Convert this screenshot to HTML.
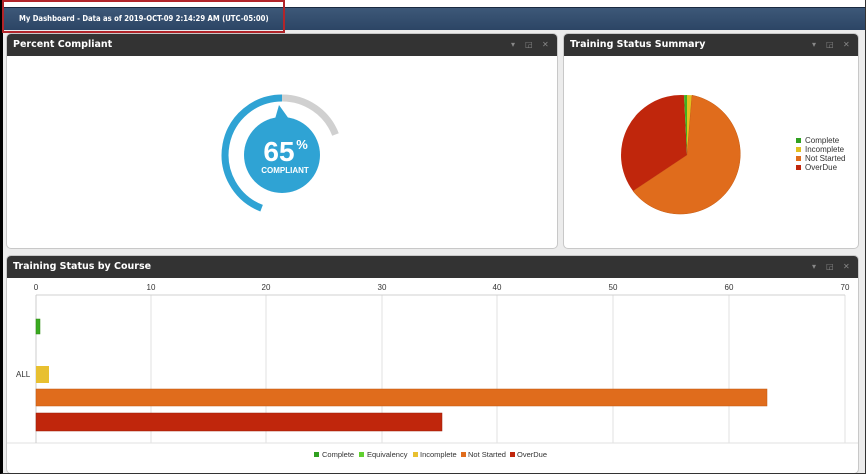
<!DOCTYPE html>
<html><head><style>
body{margin:0;width:866px;height:474px;overflow:hidden;background:#fff;font-family:"DejaVu Sans",Verdana,sans-serif;position:relative}
.frame{position:absolute;left:0;top:0;width:866px;height:474px;box-sizing:border-box;border-left:3px solid #000;border-right:1px solid #333;border-bottom:1px solid #333}
.bg{position:absolute;left:3px;top:29px;right:1px;bottom:1px;background:#ececec}
.hdr{position:absolute;left:3px;top:7px;right:1px;height:22px;background:linear-gradient(#3d5878,#2c4565);border-top:1px solid #1a2a40}
.hdr span{position:absolute;left:16px;top:6px;color:#fff;font-size:8px;font-weight:bold;transform:scaleX(0.86);transform-origin:0 0;white-space:nowrap}
.red{position:absolute;left:2px;top:0;width:279px;height:29px;border:2px solid #b2252a}
.panel{position:absolute;background:#fff;border:1px solid #c8c8c8;border-radius:5px;overflow:hidden}
.panel .t{height:22px;background:#333;color:#fff;font-size:9.5px;font-weight:bold;line-height:22px;padding-left:6px;position:relative}
.ic{position:absolute;right:6px;top:0;width:40px;height:22px}
.ic i{position:absolute;top:0;color:#888;font-style:normal;font-size:8px}
svg text{font-family:"Liberation Sans",Arial,sans-serif}
</style></head><body>
<div class="bg"></div>
<div class="hdr"><span>My Dashboard - Data as of 2019-OCT-09 2:14:29 AM (UTC-05:00)</span></div>
<div class="panel" style="left:6px;top:33px;width:550px;height:214px">
<div class="t">Percent Compliant<span class="ic"><i style="left:0">▾</i><i style="left:14px">◲</i><i style="left:31px">✕</i></span></div>
<svg width="550" height="192" style="position:absolute;left:0;top:22px">
<path d="M275 42 A57 57 0 0 1 328.5 78.5" fill="none" stroke="#d0d0d0" stroke-width="7"/>
<path d="M275 42 A57 57 0 0 0 254.6 152.2" fill="none" stroke="#2fa3d4" stroke-width="7"/>
<circle cx="275" cy="99" r="38" fill="#2fa3d4"/>
<path d="M268 63 L272 49 L282 63 Z" fill="#2fa3d4"/>
<text x="272" y="105" font-size="28" font-weight="bold" fill="#fff" text-anchor="middle">65</text>
<text x="295" y="93" font-size="13" font-weight="bold" fill="#fff" text-anchor="middle">%</text>
<text x="278" y="117" font-size="8" font-weight="bold" fill="#fff" text-anchor="middle">COMPLIANT</text>
</svg></div>
<div class="panel" style="left:563px;top:33px;width:294px;height:214px">
<div class="t">Training Status Summary<span class="ic"><i style="left:0">▾</i><i style="left:14px">◲</i><i style="left:31px">✕</i></span></div>
<svg width="294" height="192" style="position:absolute;left:0;top:22px">
<g transform="translate(123,99)">
<path d="M0 0 L0 -60 A60 60 0 0 1 5 -59.8 Z" fill="#e0c020"/>
<path d="M0 0 L5 -59.8 A60 60 0 1 1 -54 36 Z" fill="#e06c1c" stroke="#c55a10" stroke-width="0.5"/>
<path d="M0 0 L-54 36 A60 60 0 0 1 -3 -59.9 Z" fill="#c0260c"/>
<path d="M0 0 L-3 -59.9 A60 60 0 0 1 0 -60 Z" fill="#40b020"/>
</g>
<g font-size="8" fill="#333">
<rect x="232" y="82" width="5" height="5" fill="#30a020"/><text x="241" y="87">Complete</text>
<rect x="232" y="91" width="5" height="5" fill="#e0c020"/><text x="241" y="96">Incomplete</text>
<rect x="232" y="100" width="5" height="5" fill="#e06c1c"/><text x="241" y="105">Not Started</text>
<rect x="232" y="109" width="5" height="5" fill="#c0260c"/><text x="241" y="114">OverDue</text>
</g></svg></div>
<div class="panel" style="left:6px;top:255px;width:851px;height:217px">
<div class="t">Training Status by Course<span class="ic"><i style="left:0">▾</i><i style="left:14px">◲</i><i style="left:31px">✕</i></span></div>
<svg width="851" height="195" style="position:absolute;left:0;top:22px">
<g stroke="#e2e2e2"><line x1="144" y1="17" x2="144" y2="165"/><line x1="259" y1="17" x2="259" y2="165"/><line x1="375" y1="17" x2="375" y2="165"/><line x1="490" y1="17" x2="490" y2="165"/><line x1="606" y1="17" x2="606" y2="165"/><line x1="722" y1="17" x2="722" y2="165"/><line x1="838" y1="17" x2="838" y2="165"/><line x1="29" y1="17" x2="838" y2="17" stroke="#d0d0d0"/><line x1="0" y1="165" x2="851" y2="165"/><line x1="29" y1="17" x2="29" y2="165" stroke="#ccc"/></g>
<g font-size="8" fill="#333" text-anchor="middle"><text x="29" y="12">0</text><text x="144" y="12">10</text><text x="259" y="12">20</text><text x="375" y="12">30</text><text x="490" y="12">40</text><text x="606" y="12">50</text><text x="722" y="12">60</text><text x="838" y="12">70</text></g>
<text x="9" y="99" font-size="8" fill="#333">ALL</text>
<rect x="29" y="41" width="4" height="15" fill="#3aaa20" stroke="#2a8a10" stroke-width="0.5"/>
<rect x="29" y="88" width="13" height="17" fill="#e8c030"/>
<rect x="29" y="111" width="731" height="17" fill="#e06c1c" stroke="#c05810" stroke-width="0.5"/>
<rect x="29" y="135" width="406" height="18" fill="#c0260c" stroke="#9a1c08" stroke-width="0.5"/>
<g font-size="7.5" fill="#333">
<rect x="307" y="174" width="5" height="5" fill="#30a020"/><text x="315" y="179">Complete</text>
<rect x="352" y="174" width="5" height="5" fill="#60d030"/><text x="360" y="179">Equivalency</text>
<rect x="406" y="174" width="5" height="5" fill="#e8c030"/><text x="413" y="179">Incomplete</text>
<rect x="454" y="174" width="5" height="5" fill="#e06c1c"/><text x="461" y="179">Not Started</text>
<rect x="503" y="174" width="5" height="5" fill="#c0260c"/><text x="510" y="179">OverDue</text>
</g></svg></div>
<div class="frame"></div>
<div class="red"></div>
</body></html>
